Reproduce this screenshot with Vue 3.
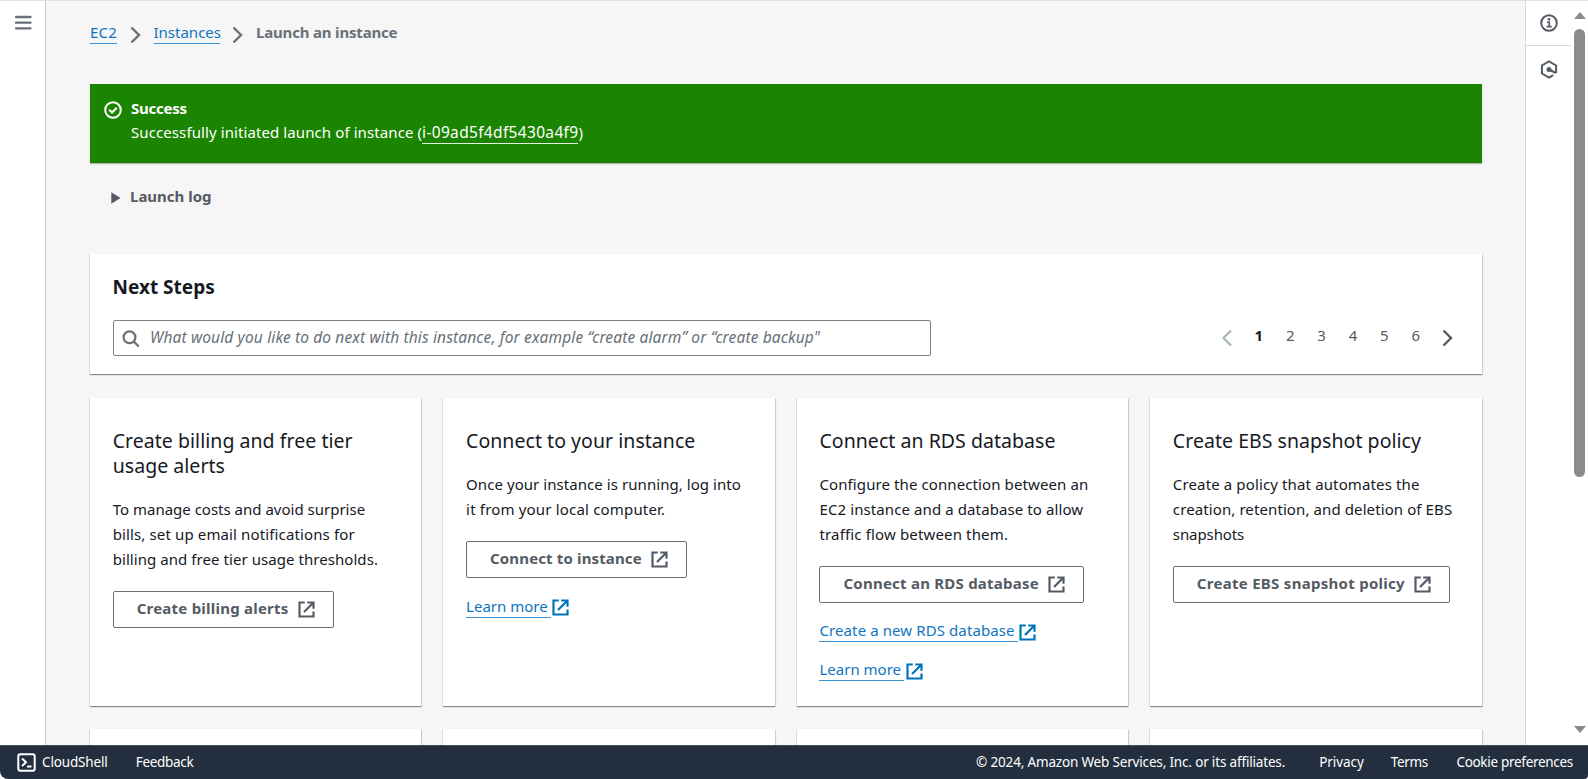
<script setup>
import { h } from 'vue'

const cards = [
  {
    key: 'billing',
    title: ['Create billing and free tier', 'usage alerts'],
    body: ['To manage costs and avoid surprise', 'bills, set up email notifications for', 'billing and free tier usage thresholds.'],
    button: 'Create billing alerts',
    links: []
  },
  {
    key: 'connect',
    title: ['Connect to your instance'],
    body: ['Once your instance is running, log into', 'it from your local computer.'],
    button: 'Connect to instance',
    links: ['Learn more']
  },
  {
    key: 'rds',
    title: ['Connect an RDS database'],
    body: ['Configure the connection between an', 'EC2 instance and a database to allow', 'traffic flow between them.'],
    button: 'Connect an RDS database',
    links: ['Create a new RDS database', 'Learn more']
  },
  {
    key: 'ebs',
    title: ['Create EBS snapshot policy'],
    body: ['Create a policy that automates the', 'creation, retention, and deletion of EBS', 'snapshots'],
    button: 'Create EBS snapshot policy',
    links: []
  }
]
const pages = [1, 2, 3, 4, 5, 6]

const ExternalIcon = () =>
  h('svg', { viewBox: '0 0 17 17', width: 17, height: 17, fill: 'none', stroke: 'currentColor', 'stroke-width': 2.2 }, [
    h('path', { d: 'M6.8 1.5H1.5V15.5H15.5V10.5' }),
    h('path', { d: 'M9.2 1.5H15.5V7.8M15 2L6 11' })
  ])
</script>

<template>
  <div class="page">
    <div class="workspace">
      <nav class="side-left">
        <svg width="17" height="16" viewBox="0 0 17 16" fill="none" stroke="#687078" stroke-width="2.3" stroke-linecap="round">
          <path d="M1 2H15.500M1 7.700H15.500M1 13.400H15.500" />
        </svg>
      </nav>

      <main class="content">
        <div class="crumbs">
          <a class="crumb-ec2">EC2</a>
          <svg class="chev" width="12" height="18" viewBox="0 0 12 18" fill="none" stroke="#687078" stroke-width="2.4"><path d="M1.500 1.500L9 9L1.500 16.500" /></svg>
          <a class="crumb-inst">Instances</a>
          <svg class="chev" width="12" height="18" viewBox="0 0 12 18" fill="none" stroke="#687078" stroke-width="2.4"><path d="M1.500 1.500L9 9L1.500 16.500" /></svg>
          <b class="crumb-cur">Launch an instance</b>
        </div>

        <section class="flash">
          <svg class="ok" width="18" height="18" viewBox="0 0 18 18" fill="none" stroke="#fff" stroke-width="2">
            <circle cx="9" cy="9" r="7.800" /><path d="M5.200 8.800L8 11.500L12.800 6.700" />
          </svg>
          <div>
            <div class="flash-title">Success</div>
            <div class="flash-text"><span class="msg">Successfully initiated launch of instance (</span><a>i-09ad5f4df5430a4f9</a>)</div>
          </div>
        </section>

        <div class="log">
          <svg width="10" height="12" viewBox="0 0 10 12"><path d="M0.300 0.300L9.600 6L0.300 11.700Z" fill="#545b64" /></svg>
          <b>Launch log</b>
        </div>

        <section class="panel steps">
          <h2>Next Steps</h2>
          <div class="tools">
            <div class="search">
              <svg width="18" height="18" viewBox="0 0 18 18" fill="none" stroke="#687078" stroke-width="2.200"><circle cx="7.500" cy="7.300" r="5.900" /><path d="M11.800 11.600L16.800 16.500" /></svg>
              <em>What would you like to do next with this instance, for example “create alarm” or “create backup"</em>
            </div>
            <div class="pager">
              <svg class="prev" width="12" height="18" viewBox="0 0 12 18" fill="none" stroke="#aab7b8" stroke-width="2.200"><path d="M10 1.500L2.500 9L10 16.500" /></svg>
              <span v-for="p in pages" :key="p" :class="{ on: p === 1 }">{{ p }}</span>
              <svg class="next" width="12" height="18" viewBox="0 0 12 18" fill="none" stroke="#545b64" stroke-width="2.400"><path d="M1.500 1.500L9 9L1.500 16.500" /></svg>
            </div>
          </div>
        </section>

        <div class="grid">
          <article v-for="c in cards" :key="c.key" class="panel card" :class="c.key">
            <h3><span v-for="(t, i) in c.title" :key="i">{{ t }}</span></h3>
            <p><span v-for="(t, i) in c.body" :key="i" :class="'b' + i">{{ t }}</span></p>
            <button type="button"><span>{{ c.button }}</span><ExternalIcon /></button>
            <div v-for="(l, i) in c.links" :key="l" class="link" :class="'l' + i"><a>{{ l }}</a><ExternalIcon /></div>
          </article>
          <article v-for="n in 4" :key="n" class="panel card"></article>
        </div>
      </main>

      <aside class="side-right">
        <div class="tool">
          <svg width="18" height="18" viewBox="0 0 18 18" fill="none" stroke="#545b64" stroke-width="2"><circle cx="9" cy="9" r="7.800" /><path d="M7 8H9.200V12.600M6.500 12.600H11.700" stroke-width="1.700" /><circle cx="9" cy="5.200" r="1.300" fill="#545b64" stroke="none" /></svg>
        </div>
        <div class="tool hex">
          <svg width="18" height="19" viewBox="0 0 18 19" fill="none" stroke="#545b64" stroke-width="2"><path d="M13.200 15.200L9 17.500L1.900 13.500V5.500L9 1.500L16.100 5.500V13" /><path d="M9 9.500L15.800 13" stroke-width="2" /><circle cx="9" cy="9.500" r="2.500" fill="#545b64" stroke="none" /></svg>
        </div>
      </aside>

      <div class="scroll">
        <svg width="12" height="7" viewBox="0 0 12 7"><path d="M0 7L6 0L12 7Z" fill="#8b8b8b" /></svg>
        <div class="thumb"></div>
        <svg width="12" height="7" viewBox="0 0 12 7"><path d="M0 0H12L6 7Z" fill="#8b8b8b" /></svg>
      </div>
    </div>

    <footer>
      <svg width="19" height="19" viewBox="0 0 19 19" fill="none" stroke="#fff" stroke-width="2"><rect x="1.300" y="1.300" width="16.400" height="16.400" rx="2" /><path d="M5 5.500L9 9.200L5 13M10 13.500H14.500" /></svg>
      <span class="f-shell">CloudShell</span>
      <span class="f-feed">Feedback</span>
      <span class="f-copy">© 2024, Amazon Web Services, Inc. or its affiliates.</span>
      <span class="f-priv">Privacy</span>
      <span class="f-terms">Terms</span>
      <span class="f-cook">Cookie preferences</span>
    </footer>
  </div>
</template>

<style>
body { margin: 0; background: #fff; overflow: hidden; }
</style>

<style scoped>
* { box-sizing: border-box; }
.page {
  width: 1588px; height: 779px; display: flex; flex-direction: column; overflow: hidden;
  font: 15px/25px "Noto Sans", "Open Sans", sans-serif; color: #16191f; white-space: nowrap;
}
svg { display: block; flex: none; }
.workspace { height: 745px; display: flex; border-top: 1px solid #e1e1e1; background: #fff; }
.side-left { width: 46px; flex: none; border-right: 1px solid #ccc; padding: 14px 0 0 14.500px; }
.content { width: 1479px; flex: none; background: #f6f6f6; padding: 0 43.500px 0 44px; overflow: hidden; }

.crumbs { display: flex; height: 25px; margin-top: 19px; color: #687078; }
.crumbs a, .link a { color: #0f74c0; border-bottom: 1.500px solid #3a92d2; height: 24px; }
.crumb-ec2 { width: 27px; letter-spacing: .2px; }
.crumb-inst { width: 66px; }
.chev { margin: 6px 12px 0 12.500px; }
.crumb-cur { letter-spacing: -.18px; }

.flash {
  display: flex; height: 79px; margin-top: 39px; padding: 12px 0 0 14px; background: #1b8400; color: #fff;
  box-shadow: 0 1px 1px rgba(0, 28, 36, .3);
}
.ok { margin: 5px 9px 0 0; }
.flash-title { font-weight: 700; letter-spacing: -.25px; }
.flash-text { margin-top: -1px; }
.msg { letter-spacing: .095px; }
.flash a { border-bottom: 1px solid #e4f0e2; display: inline-block; height: 24px; line-height: 25px; font-size: 15.500px; letter-spacing: .33px; }

.log { display: flex; height: 25px; margin: 21px 0 0 21px; color: #545b64; }
.log svg { margin: 8px 9px 0 0; }

.panel { background: #fff; box-shadow: 0 1px 1px 0 rgba(0, 28, 36, .4), 1px 1px 1px 0 rgba(0, 28, 36, .12), -1px 0 1px 0 rgba(0, 28, 36, .05); }
.steps { height: 120px; margin-top: 45px; padding: 20px 23px 0 22.500px; }
h2 { margin: 0; font-size: 19px; line-height: 27px; font-weight: 700; }
.tools { display: flex; justify-content: space-between; margin-top: 19px; }
.search { width: 818.500px; height: 36px; border: 1.500px solid #7b848c; border-radius: 2px; display: flex; padding: 4px 0 0 8px; color: #687078; }
.search svg { margin: 4.500px 10.500px 0 0; }
.search em { font-size: 15.500px; letter-spacing: .135px; }
.pager { display: flex; color: #545b64; padding-top: 3px; }
.pager span { width: 31.400px; text-align: center; }
.pager .on { font-weight: 700; color: #16191f; }
.prev { margin: 6px 10px 0 0; }
.next { margin: 6px 5px 0 10px; }

.grid { display: grid; grid-template-columns: repeat(4, 331.400px); gap: 23px 22px; grid-auto-rows: 308px; margin-top: 24px; }
.card { padding: 30px 22px 0 22.700px; }
h3 { margin: 0; font-size: 19.500px; line-height: 25px; font-weight: 400; letter-spacing: .04px; }
h3 span, p span { display: block; width: max-content; }
p { margin: 19px 0 0; letter-spacing: .1px; }
.billing .b0 { letter-spacing: 0; }
.billing .b1 { letter-spacing: .13px; }
.billing .b2, .connect .b0 { letter-spacing: .06px; }
.connect .b1 { letter-spacing: .18px; }
.rds .b2 { letter-spacing: .15px; }
.ebs .b0 { letter-spacing: .13px; }
.ebs .b2 { letter-spacing: -.1px; }
button {
  display: flex; margin: 19px 0 0; height: 37px; padding: 4px 18px 0 23px; border: 1.500px solid #687078; border-radius: 2px;
  background: #fff; color: #545b64; font: 700 15px/25px "Noto Sans", "Open Sans", sans-serif; letter-spacing: .23px;
}
.connect button { letter-spacing: .14px; }
.ebs button { letter-spacing: .28px; }
button svg { margin: 5px 0 0 9.500px; }
.connect button svg { margin-left: 9px; }
.link { display: flex; margin-top: 16px; height: 22px; color: #0073bb; }
.link a { padding-right: 3px; }
.link svg { margin: 6px 0 0 1.500px; }
.connect .link svg { margin: 5px 0 0 1px; }
.rds .l0 { margin-top: 15px; letter-spacing: .1px; }
.rds .l1 { margin-top: 17px; }

.side-right { width: 46px; flex: none; border-left: 1px solid #d5dbdb; }
.tool { height: 45px; padding: 13px 0 0 14px; }
.tool:first-child { border-bottom: 1px solid #d5dbdb; }
.hex { padding-top: 14px; }
.scroll { width: 18px; display: flex; flex-direction: column; align-items: center; padding-top: 11px; }
.thumb { width: 11px; height: 448px; margin: 10px 0 249px; border-radius: 6px; background: #8b8b8b; }

footer {
  height: 34px; background: #232f3e; border-top: 1px solid #46505c; border-radius: 0 0 4px 8px; color: #fff;
  display: flex; font-size: 13.500px; line-height: 32px;
}
footer svg { margin: 7px 6px 0 17px; }
.f-shell { letter-spacing: -.15px; }
.f-feed { margin-left: 28px; letter-spacing: -.3px; }
.f-copy { margin-left: auto; letter-spacing: -.17px; }
.f-priv { margin-left: 34px; letter-spacing: -.05px; }
.f-terms { margin-left: 27px; letter-spacing: -.35px; }
.f-cook { margin: 0 15px 0 28.500px; letter-spacing: -.3px; }
</style>
